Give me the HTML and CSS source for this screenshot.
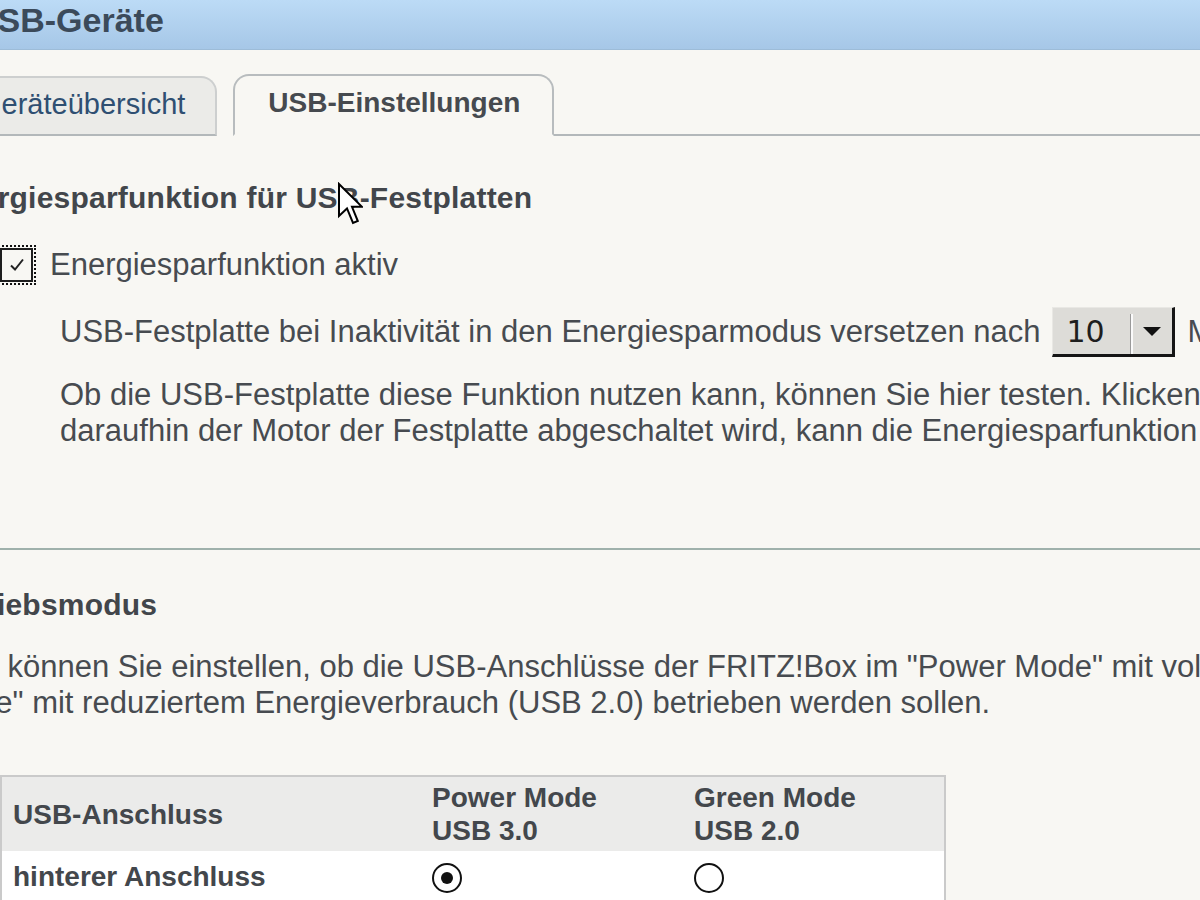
FILE: index.html
```html
<!DOCTYPE html>
<html lang="de">
<head>
<meta charset="utf-8">
<title>USB-Geräte</title>
<link rel="stylesheet" href="styles.css">
</head>
<body>
<div class="page">
  <header class="titlebar"><h1 class="title">USB-Geräte</h1></header>
  <nav class="tabs">
    <div class="tab">Geräteübersicht</div>
    <div class="tab tab-active">USB-Einstellungen</div>
    <div class="tab-rest"></div>
  </nav>
  <main class="content">
    <h2 class="heading first">Energiesparfunktion für USB-Festplatten</h2>
    <label class="check-row">
      <span class="checkbox"><svg viewBox="0 0 20 20" width="20" height="20"><path d="M4 10.5 L8 14.5 L16 4.5" fill="none" stroke="#222" stroke-width="2"/></svg></span>
      <span class="check-label">Energiesparfunktion aktiv</span>
    </label>
    <div class="indent">
      <div class="select-row">
        <span>USB-Festplatte bei Inaktivität in den Energiesparmodus versetzen nach</span>
        <span class="select"><span class="select-val">10</span><span class="select-sep"></span><span class="select-arrow"></span></span>
        <span>Minuten</span>
      </div>
      <p class="text indent-text">Ob die USB-Festplatte diese Funktion nutzen kann, können Sie hier testen. Klicken Sie dazu auf "Test". Wenn<br>daraufhin der Motor der Festplatte abgeschaltet wird, kann die Energiesparfunktion genutzt werden.</p>
    </div>
    <hr class="rule">
    <h2 class="heading second">Betriebsmodus</h2>
    <p class="text mode-text">Hier können Sie einstellen, ob die USB-Anschlüsse der FRITZ!Box im "Power Mode" mit voller Leistung (USB 3.0) oder im "Green<br><span class="line2">Mode" mit reduziertem Energieverbrauch (USB 2.0) betrieben werden sollen.</span></p>
    <table class="ports">
      <thead>
        <tr>
          <th class="c1">USB-Anschluss</th>
          <th class="c2">Power Mode<br>USB 3.0</th>
          <th class="c3">Green Mode<br>USB 2.0</th>
        </tr>
      </thead>
      <tbody>
        <tr>
          <td class="c1">hinterer Anschluss</td>
          <td class="c2"><span class="radio on"></span></td>
          <td class="c3"><span class="radio"></span></td>
        </tr>
      </tbody>
    </table>
  </main>
</div>
<svg class="cursor" width="26" height="46" viewBox="0 0 13 23"><path d="M1 1 L1 17 L5 13.2 L8 20.5 L10.4 19.5 L7.5 12.4 L12.5 12.4 Z" fill="#fff" stroke="#000" stroke-width="1" stroke-linejoin="miter"/></svg>
</body>
</html>
```
FILE: styles.css
```css
html, body {
  margin: 0;
  padding: 0;
  overflow: hidden;
  width: 1200px;
  height: 900px;
  background: #f8f7f3;
}
body {
  font-family: "Liberation Sans", Arial, sans-serif;
  color: #474b50;
  position: relative;
}
.page {
  margin-left: -58px;
  width: 1400px;
}
.titlebar {
  height: 49px;
  background: linear-gradient(#bcdbf6, #a6c7e7);
  border-bottom: 1px solid #9dbcd8;
}
.title {
  margin: 0;
  padding-left: 31px;
  font-size: 34px;
  line-height: 40px;
  font-weight: bold;
  color: #3b4a5a;
  white-space: nowrap;
}
.tabs {
  display: flex;
  align-items: flex-end;
  margin-top: 23px;
  padding-left: 3px;
  height: 63px;
}
.tab {
  height: 60px;
  box-sizing: border-box;
  padding: 0 30px 0 32px;
  font-size: 29px;
  line-height: 52px;
  color: #2f4f72;
  background: #ebebe8;
  border: 2px solid #cdcfcf;
  border-bottom: 2px solid #b3b8ba;
  border-radius: 16px 16px 0 0;
  white-space: nowrap;
}
.tab-active {
  margin-left: 16px;
  height: 62px;
  padding: 0 32px 0 33px;
  font-size: 28px;
  font-weight: bold;
  color: #464a4f;
  background: #f8f7f3;
  border-color: #b8bcbe;
  border-bottom-color: #f8f7f3;
  line-height: 54px;
}
.tab-rest {
  flex: 1;
  height: 0;
  border-bottom: 2px solid #b3b8ba;
}
.content {
  display: flex;
  flex-direction: column;
  align-items: flex-start;
}
.heading {
  margin: 0;
  font-size: 30px;
  letter-spacing: 0.22px;
  line-height: 36px;
  font-weight: bold;
  color: #42464b;
  white-space: nowrap;
}
.heading.first { margin-top: 44px; }
.check-row {
  display: flex;
  align-items: center;
  margin-top: 31px;
  margin-left: 58px;
  height: 36px;
}
.checkbox {
  width: 33px;
  height: 34px;
  box-sizing: border-box;
  border: 2px solid #1e1e1e;
  background: #f8f7f3;
  outline: 2px dotted #111;
  outline-offset: 1px;
  display: flex;
  align-items: center;
  justify-content: center;
}
.check-label {
  margin-left: 17px;
  font-size: 31px;
  line-height: 36px;
  white-space: nowrap;
}
.indent {
  margin-left: 118px;
  display: flex;
  flex-direction: column;
}
.select-row {
  margin-top: 24px;
  display: flex;
  align-items: center;
  gap: 12px;
  height: 50px;
  font-size: 31px;
  white-space: nowrap;
}
.select {
  display: flex;
  align-items: center;
  width: 123px;
  height: 50px;
  box-sizing: border-box;
  background: #dddcd8;
  border-top: 1px solid #e9e8e4;
  border-left: 1px solid #e9e8e4;
  border-right: 3px solid #151515;
  border-bottom: 3px solid #151515;
}
.select-val {
  font-family: "DejaVu Sans", sans-serif;
  font-size: 30px;
  color: #1e1e1e;
  padding-left: 13px;
  width: 64px;
}
.select-sep {
  width: 2px;
  height: 40px;
  margin-top: 6px;
  background: #fafafa;
  border-left: 1px solid #9a9a9a;
}
.select-arrow {
  margin-left: 10px;
  width: 0;
  height: 0;
  border-left: 9px solid transparent;
  border-right: 9px solid transparent;
  border-top: 9px solid #111;
}
.text {
  margin: 0;
  font-size: 31px;
  line-height: 36px;
  white-space: nowrap;
}
.indent-text { margin-top: 20px; }
.rule {
  align-self: stretch;
  margin: 99px 0 0 0;
  height: 0;
  border: 0;
  border-top: 2px solid #9fb1ab;
}
.heading.second { margin-top: 37px; margin-left: -6px; }
.mode-text { margin-top: 26px; }
.line2 { display: inline-block; margin-left: -7px; }
.ports {
  margin-top: 54px;
  margin-left: 58px;
  width: 946px;
  border-collapse: collapse;
  border: 2px solid #cacaca;
  font-size: 28px;
  color: #43474c;
}
.ports th, .ports td {
  text-align: left;
  font-weight: bold;
  padding: 0;
  vertical-align: middle;
}
.ports thead tr {
  background: #ebebea;
  height: 75px;
}
.ports th { line-height: 33px; }
.ports tbody tr {
  background: #ffffff;
  height: 52px;
}
.c1 { width: 419px; padding-left: 11px !important; }
.c2 { width: 262px; }
.radio {
  display: block;
  width: 30px;
  height: 30px;
  box-sizing: border-box;
  border: 2px solid #111;
  border-radius: 50%;
  background: #fff;
  position: relative;
  margin-top: 2px;
}
.radio.on::after {
  content: "";
  position: absolute;
  left: 7px;
  top: 7px;
  width: 12px;
  height: 12px;
  border-radius: 50%;
  background: #111;
}
.cursor {
  position: absolute;
  left: 337px;
  top: 182px;
}
```
